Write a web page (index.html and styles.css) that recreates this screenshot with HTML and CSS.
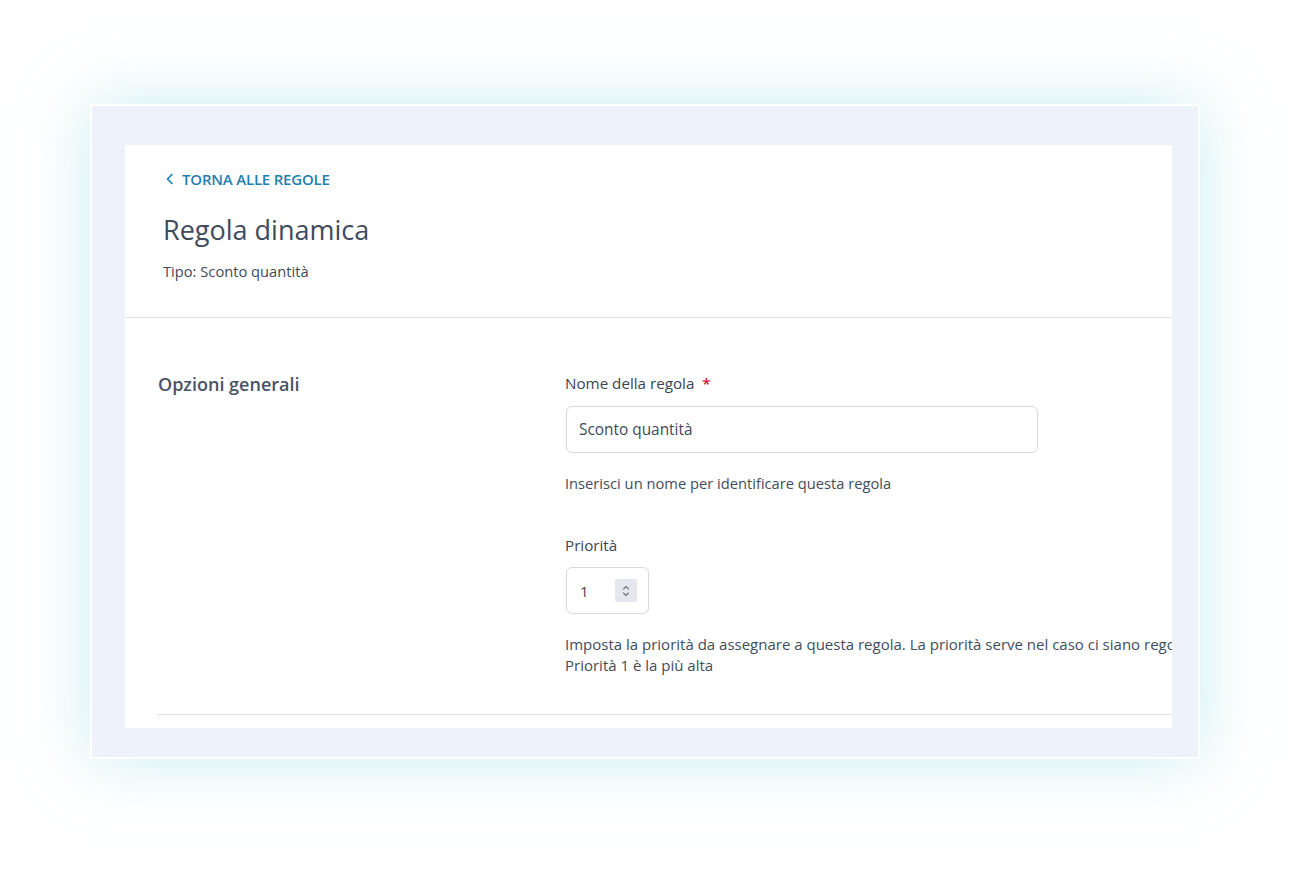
FILE: index.html
```html
<!DOCTYPE html>
<html lang="it">
<head>
    <meta charset="UTF-8">
    <title>Regola dinamica</title>
    <meta name="viewport" content="width=device-width, initial-scale=1.0">
    <link rel="stylesheet" href="styles.css">
</head>
<body>

<div class="stage">
    <div class="frame">
        <div class="viewport">
            <div class="card">
                <div class="card-header">
                    <a class="back-link" href="#">
                        <svg width="10" height="12" viewBox="0 0 10 12"><path d="M7 1.5L2.5 6L7 10.5" fill="none" stroke="#1f7fae" stroke-width="1.7" stroke-linecap="round" stroke-linejoin="round"/></svg>
                        TORNA ALLE REGOLE
                    </a>
                    <h1 class="page-title">Regola dinamica</h1>
                    <p class="page-type">Tipo: Sconto quantità</p>
                </div>

                <div class="section">
                    <h2 class="section-title">Opzioni generali</h2>
                    <div class="fields">
                        <label class="field-label" for="ruleName">Nome della regola <span class="required">*</span></label>
                        <input class="text-input" type="text" id="ruleName" value="Sconto quantità">
                        <p class="help">Inserisci un nome per identificare questa regola</p>

                        <label class="field-label label-priority">Priorità</label>
                        <div class="number-input">
                            <span class="number-value">1</span>
                            <span class="spinner">
                                <svg width="10" height="16" viewBox="0 0 10 16"><path d="M2.5 6L5 3.5L7.5 6M2.5 10L5 12.5L7.5 10" fill="none" stroke="#6b7280" stroke-width="1.1" stroke-linecap="round" stroke-linejoin="round"/></svg>
                            </span>
                        </div>
                        <p class="help help-wide">Imposta la priorità da assegnare a questa regola. La priorità serve nel caso ci siano regole in conflitto tra loro.<br>Priorità 1 è la più alta</p>
                    </div>
                </div>
                <div class="divider"></div>
            </div>
        </div>
    </div>
</div>

</body>
</html>
```

FILE: styles.css
```css
body {
    margin: 0;
    background: #fff;
    font-family: "Open Sans", "Noto Sans", sans-serif;
    color: #3f4a5a;
}
.stage {
    padding: 104px 0 0 90px;
    height: 871px;
    box-sizing: border-box;
    overflow: hidden;
}
.frame {
    border: 2px solid #fff;
    background: #eef3fb;
    box-shadow: 0 0 60px rgba(170, 225, 228, 0.6);
    padding: 39px 26px 0 33px;
    box-sizing: content-box;
    width: 1047px;
    height: 612px;
}
.viewport {
    width: 1047px;
    height: 583px;
    overflow: hidden;
}
.card {
    width: 1400px;
    height: 700px;
    background: #fff;
    box-shadow: -1px 0 2px rgba(0, 0, 0, 0.05);
}
.card-header {
    height: 173px;
    border-bottom: 1px solid #dfe1e6;
    padding: 24px 0 0 38px;
    box-sizing: border-box;
}
.back-link {
    display: flex;
    align-items: center;
    gap: 7px;
    margin-left: 2px;
    color: #1f7fae;
    text-decoration: none;
    font-size: 15px;
    font-weight: 600;
    letter-spacing: -0.2px;
    height: 20px;
}
.page-title {
    margin: 23px 0 0;
    font-size: 27px;
    font-weight: 400;
    color: #404b5b;
    line-height: 36px;
}
.page-type {
    margin: 13px 0 0;
    font-size: 14.7px;
    color: #3f4a5a;
}
.section {
    display: grid;
    grid-template-columns: 407px 1fr;
    padding: 55px 0 0 33px;
    height: 396px;
    box-sizing: border-box;
}
.section-title {
    margin: 0;
    font-size: 18px;
    font-weight: 600;
    color: #4a5363;
    line-height: 24px;
    margin-top: -1px;
}
.fields {
    display: flex;
    flex-direction: column;
    align-items: flex-start;
}
.field-label {
    font-size: 15.2px;
    color: #3a4455;
    line-height: 20px;
}
.required {
    color: #d2143a;
    margin-left: 4px;
    font-weight: 600;
}
.text-input {
    margin: 13px 0 0 1px;
    width: 472px;
    height: 47px;
    box-sizing: border-box;
    border: 1px solid #d6d9e1;
    border-radius: 6px;
    padding: 0 12px;
    font-family: inherit;
    font-size: 15.4px;
    color: #3f4a5a;
    background: #fff;
}
.help {
    margin: 20px 0 0;
    font-size: 14.7px;
    color: #434d5c;
    line-height: 21px;
}
.label-priority {
    margin-top: 41px;
}
.number-input {
    margin: 12px 0 0 1px;
    width: 83px;
    height: 47px;
    box-sizing: border-box;
    border: 1px solid #d6d9e1;
    border-radius: 6px;
    display: flex;
    align-items: center;
    justify-content: space-between;
    padding: 0 11px 0 13px;
    font-size: 15px;
}
.spinner {
    width: 22px;
    height: 23px;
    background: #e6e7ee;
    border-radius: 2px;
    display: flex;
    align-items: center;
    justify-content: center;
}
.help-wide {
    margin-top: 20px;
    font-size: 15px;
    white-space: nowrap;
}
.divider {
    margin-left: 32px;
    border-top: 1px solid #dfe1e6;
}
```
